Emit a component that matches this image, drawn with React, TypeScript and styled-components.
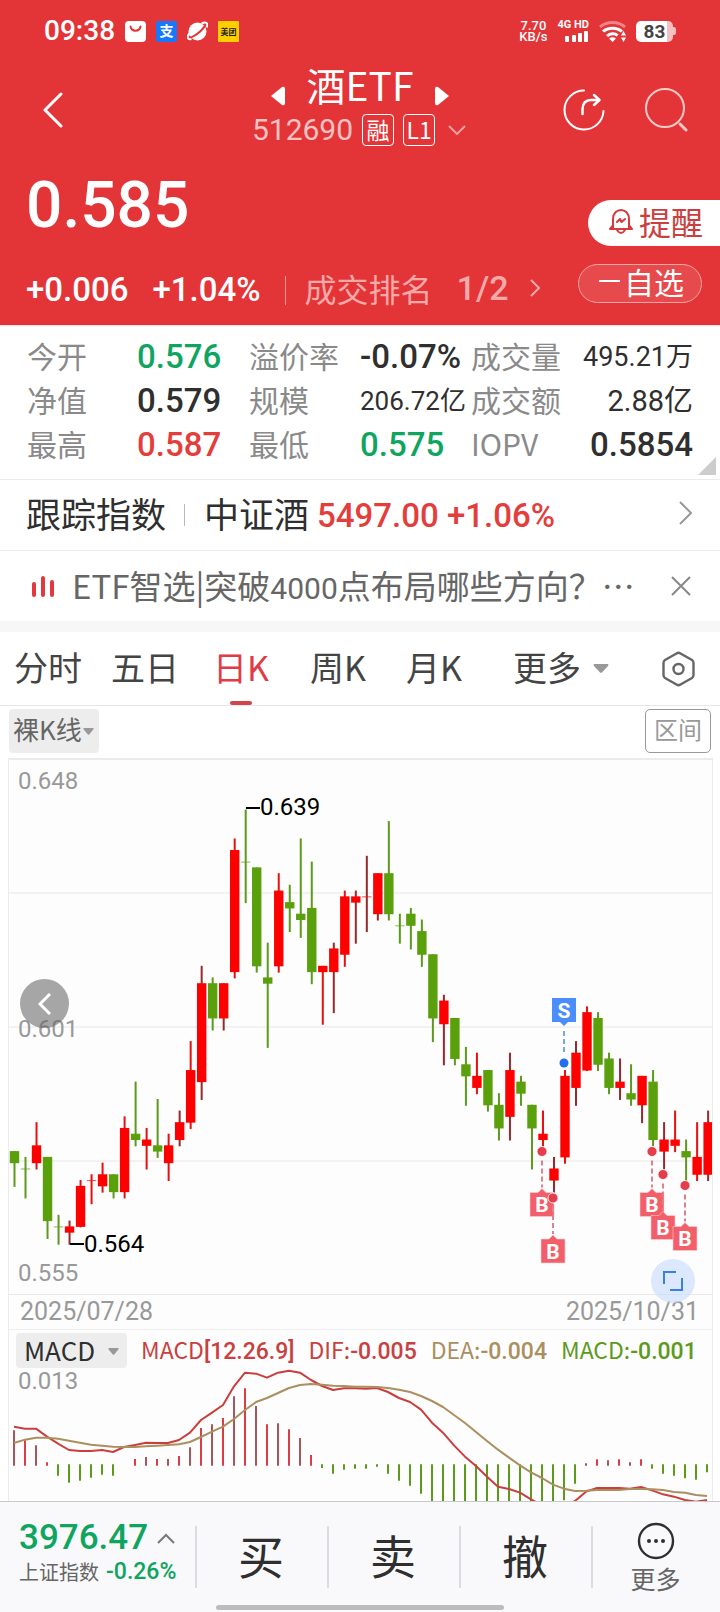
import React from 'react';
import styled, { createGlobalStyle } from 'styled-components';

const CJK = `"Noto Sans CJK SC", "Noto Sans", sans-serif`;
const NUM = `Roboto, "Noto Sans CJK SC", sans-serif`;

const RED = '#e33537';
const UP = '#e33e3b';
const DOWN = '#0fa561';
const INK = '#2f2f2f';

const GlobalStyle = createGlobalStyle`
  * { box-sizing: border-box; }
  body { margin: 0; background: #fff; font-family: ${CJK}; color: ${INK}; }
  button { border: 0; padding: 0; margin: 0; background: none; font: inherit; color: inherit; }
  dl, dt, dd, p, h1 { margin: 0; font-weight: 400; }
  svg { display: block; flex: none; }
`;

const Page = styled.div`
  display: flex;
  flex-direction: column;
  white-space: nowrap;
`;

/* ---------- header ---------- */

const Header = styled.header`
  background: ${RED};
  color: #fff;
  border-bottom: 1px solid #fcdcdc;
`;

const StatusBar = styled.div`
  display: flex;
  align-items: center;
  justify-content: space-between;
  height: 62px;
  padding: 0 44px;
`;

const StatusGroup = styled.div`
  display: flex;
  align-items: center;
  gap: 10px;
`;

const Clock = styled.span`
  font: 500 28px/32px ${NUM};
`;

const NetSpeed = styled.span`
  font: 500 13px/11px ${NUM};
  text-align: center;
  white-space: pre-line;
`;

const Signal = styled.span`
  display: flex;
  flex-direction: column;
  align-items: flex-end;
  gap: 1px;
  font: 700 11px/10px ${NUM};
`;

const Battery = styled.span`
  display: flex;
  align-items: center;
  &::after {
    content: '';
    width: 3px;
    height: 8px;
    border-radius: 0 2px 2px 0;
    background: #f6bfc0;
  }
`;

const BatteryLevel = styled.span`
  width: 37px;
  height: 21px;
  border-radius: 5px;
  background: linear-gradient(90deg, #fff 83%, #f6bfc0 83%);
  color: #444;
  font: 700 19px/21px ${NUM};
  text-align: center;
`;

const NavBar = styled.nav`
  display: grid;
  grid-template-columns: 1fr auto 1fr;
  align-items: center;
`;

const NavSide = styled.div<{ $end?: boolean }>`
  display: flex;
  align-items: center;
  justify-content: ${p => (p.$end ? 'flex-end' : 'flex-start')};
  gap: 40px;
  padding: 12px 32px 0 43px;
`;

const TitleBlock = styled.div`
  display: flex;
  flex-direction: column;
  align-items: center;
  gap: 8px;
`;

const TitleRow = styled.div`
  display: flex;
  align-items: center;
  gap: 22px;
  > button { padding-top: 24px; }
`;

const Title = styled.h1`
  font-size: 39px;
  line-height: 44px;
`;

const CodeRow = styled.div`
  display: flex;
  align-items: center;
  gap: 9px;
`;

const Code = styled.span`
  font: 400 30px/32px ${NUM};
  color: #fbc2c2;
`;

const Badge = styled.span`
  width: 32px;
  height: 32px;
  border: 1px solid #fff;
  border-radius: 4px;
  text-align: center;
  font-size: 23px;
  line-height: 28px;
`;

const PriceRow = styled.div`
  display: flex;
  align-items: flex-end;
  justify-content: space-between;
  height: 75px;
  margin-top: 25px;
  padding-left: 26px;
`;

const Price = styled.strong`
  align-self: flex-start;
  font: 500 64px/70px ${NUM};
`;

const RemindButton = styled.button`
  display: flex;
  align-items: center;
  gap: 6px;
  height: 46px;
  padding: 0 17px 4px 21px;
  border-radius: 23px 0 0 23px;
  background: #fff;
  color: #c9403f;
  font-size: 32px;
  line-height: 42px;
`;

const ChangeRow = styled.div`
  display: flex;
  align-items: flex-start;
  justify-content: space-between;
  padding: 18px 18px 15px 26px;
`;

const ChangeGroup = styled.div`
  display: flex;
  align-items: center;
  padding-top: 6px;
`;

const Change = styled.span`
  margin-right: 24px;
  font: 500 33px/40px ${NUM};
`;

const RankLink = styled.a`
  display: flex;
  align-items: center;
  padding: 0 0 5px 19px;
  border-left: 1px solid #f09a9a;
  color: #f7a9a9;
  font-size: 32px;
  line-height: 24px;
  text-decoration: none;
`;

const RankValue = styled.span`
  margin: 0 20px 0 24px;
  font: 500 34px/24px ${NUM};
`;

const WatchButton = styled.button`
  display: flex;
  align-items: center;
  gap: 4px;
  height: 39px;
  padding: 0 17px 5px 20px;
  border: 1px solid #f3a5a5;
  border-radius: 20px;
  background: #e74a4c;
  font-size: 30px;
  line-height: 32px;
`;

/* ---------- quote details ---------- */

const Quotes = styled.dl`
  position: relative;
  display: grid;
  grid-template-columns: 110fr 112fr 111fr 111fr 90fr 132fr;
  padding: 9px 27px 12px;
  border-bottom: 1px solid #ebebeb;
  line-height: 44px;
`;

const QuoteName = styled.dt`
  min-width: 0;
  font-size: 30px;
  line-height: 41px;
  color: #8a8a8a;
`;

const QuoteValue = styled.dd<{ $tone?: string; $size?: number; $end?: boolean }>`
  display: flex;
  justify-content: ${p => (p.$end ? 'flex-end' : 'flex-start')};
  min-width: 0;
  font-family: ${NUM};
  font-weight: ${p => (p.$size ? 400 : 500)};
  font-size: ${p => p.$size ?? 33}px;
  color: ${p => p.$tone ?? INK};
`;

const Corner = styled.span`
  position: absolute;
  right: 4px;
  bottom: 4px;
  border-left: 18px solid transparent;
  border-bottom: 18px solid #ccc;
`;

const IndexLink = styled.a`
  display: flex;
  align-items: center;
  height: 71px;
  padding: 0 27px 5px 26px;
  border-bottom: 1px solid #ebebeb;
  color: ${INK};
  font-size: 35px;
  line-height: 44px;
  text-decoration: none;
`;

const IndexName = styled.span`
  margin-right: 18px;
`;

const IndexFund = styled.span`
  padding-left: 20px;
  background: linear-gradient(#bbb, #bbb) 0 60% / 1px 22px no-repeat;
`;

const IndexNumber = styled.span`
  flex: 1;
  margin-left: 8px;
  padding-top: 6px;
  font: 500 33px/44px ${NUM};
  color: ${UP};
`;

const News = styled.div`
  display: flex;
  align-items: center;
  height: 81px;
  padding: 0 29px 0 32px;
  border-bottom: 11px solid #f7f7f7;
`;

const NewsText = styled.a`
  flex: 1;
  padding: 2px 0 0 17px;
  color: #666;
  font-size: 33px;
  line-height: 44px;
  text-decoration: none;
`;

const NewsNumber = styled.span`
  font: 400 30px/44px ${NUM};
`;

/* ---------- period tabs ---------- */

const Tabs = styled.div`
  display: grid;
  grid-template-columns: 97fr 102fr 97fr 96fr 107fr 149fr 58fr;
  align-items: center;
  justify-items: start;
  height: 74px;
  padding-left: 14px;
  border-bottom: 1px solid #e6e6e6;
`;

const Tab = styled.button<{ $active?: boolean }>`
  position: relative;
  display: flex;
  align-items: center;
  gap: 12px;
  height: 73px;
  padding-bottom: 4px;
  font-size: 34px;
  color: ${p => (p.$active ? '#e33b45' : '#444')};
  &::after {
    content: '';
    display: ${p => (p.$active ? 'block' : 'none')};
    position: absolute;
    left: 50%;
    bottom: 0;
    width: 22px;
    height: 4px;
    margin-left: -11px;
    border-radius: 2px;
    background: #d0444c;
  }
`;

const Tools = styled.div`
  display: flex;
  justify-content: space-between;
  padding: 3px 9px 5px;
`;

const ModeButton = styled.button`
  display: flex;
  align-items: center;
  gap: 1px;
  height: 44px;
  padding: 0 5px 4px 4px;
  border-radius: 4px;
  background: #ededed;
  color: #666;
  font-size: 26px;
  line-height: 38px;
`;

const RangeButton = styled.button`
  height: 44px;
  padding: 0 8px 4px;
  border: 1px solid #999;
  border-radius: 5px;
  color: #999;
  font-size: 24px;
  line-height: 34px;
`;

/* ---------- chart ---------- */

const ChartFrame = styled.section`
  margin: 0 7px 0 8px;
  border: solid #ebebeb;
  border-width: 2px 1px 0;
  background: #fdfdfd;
  svg.plot { width: 100%; height: auto; }
`;

const KPanel = styled.div`
  position: relative;
  border-bottom: 1px solid #e8e8e8;
`;

const RoundButton = styled.button`
  position: absolute;
  display: flex;
  align-items: center;
  justify-content: center;
  border-radius: 50%;
`;

const PrevButton = styled(RoundButton)`
  left: 11px;
  top: 219px;
  width: 49px;
  height: 49px;
  background: rgba(100, 100, 100, 0.57);
`;

const ExpandButton = styled(RoundButton)`
  right: 17px;
  bottom: -9px;
  width: 44px;
  height: 44px;
  background: rgba(205, 222, 252, 0.7);
`;

const Dates = styled.div`
  display: flex;
  justify-content: space-between;
  padding: 0 13px 0 11px;
  border-bottom: 1px solid #efefef;
  color: #999;
  font: 400 25px/34px ${NUM};
`;

const MacdPanel = styled.div`
  display: grid;
  > * { grid-area: 1 / 1; }
`;

const MacdHead = styled.div`
  display: flex;
  align-items: center;
  align-self: start;
  height: 38px;
  padding: 3px 12px 0 7px;
  font-size: 24px;
  line-height: 34px;
`;

const MacdSelect = styled.button`
  display: flex;
  align-items: center;
  justify-content: space-between;
  width: 111px;
  height: 35px;
  margin-right: 14px;
  padding: 0 8px 2px;
  border-radius: 4px;
  background: #ededed;
  font-size: 26px;
  line-height: 33px;
`;

const Legend = styled.span<{ $color: string; $gap: number }>`
  margin-right: ${p => p.$gap}px;
  color: ${p => p.$color};
  font-size: 23px;
`;

const LegendNumber = styled.span`
  font: 500 23px/34px ${NUM};
`;

/* ---------- bottom bar ---------- */

const BottomBar = styled.footer`
  position: relative;
  display: grid;
  grid-template-columns: 195fr 132fr 132fr 132fr 129fr;
  height: 111px;
  border-top: 1px solid #c9c9cc;
  background: #f9f9fb;
`;

const Market = styled.div`
  padding: 17px 0 0 19px;
`;

const MarketLine = styled.div`
  display: flex;
  align-items: center;
`;

const MarketValue = styled.strong`
  margin-right: 9px;
  font: 500 35px/38px ${NUM};
  color: ${DOWN};
`;

const MarketName = styled.span`
  margin-right: 7px;
  font-size: 20px;
  line-height: 30px;
  color: #666;
`;

const MarketChange = styled.span`
  font: 500 23px/30px ${NUM};
  color: ${DOWN};
`;

const Trade = styled.button`
  padding-bottom: 6px;
  background: linear-gradient(#dcdce0, #dcdce0) 0 24px / 2px 62px no-repeat;
  font-size: 46px;
  line-height: 60px;
`;

const More = styled(Trade)`
  display: flex;
  flex-direction: column;
  align-items: center;
  padding: 20px 0 0;
  color: #666;
  font-size: 25px;
  line-height: 36px;
`;

const HomeBar = styled.span`
  position: absolute;
  left: 30%;
  right: 30%;
  bottom: 2px;
  height: 5px;
  border-radius: 3px;
  background: #bcbcbe;
`;

/* ---------- icons ---------- */

const Stroke = ({ w, h, d, color, width = 2, round }: {
  w: number; h: number; d: string; color: string; width?: number; round?: boolean;
}) => (
  <svg width={w} height={h} viewBox={`0 0 ${w} ${h}`} fill="none" stroke={color} strokeWidth={width}
    strokeLinecap={round ? 'round' : 'butt'} strokeLinejoin={round ? 'round' : 'miter'}>
    <path d={d} />
  </svg>
);

const CaretSvg = styled.svg`
  margin-top: 4px;
`;

const Caret = ({ w, h }: { w: number; h: number }) => (
  <CaretSvg width={w} height={h} viewBox="0 0 16 9" preserveAspectRatio="none">
    <path d="M1 0H15Q16 1 15 2L9 8.500Q8 9 7 8.500L1 2Q0 1 1 0Z" fill="#999" />
  </CaretSvg>
);

const BagIcon = () => (
  <svg width="21" height="21" viewBox="0 0 21 21">
    <rect width="21" height="21" rx="4" fill="#fff" />
    <path d="M5.500 5.500c1 5.500 9 5.500 10 0" fill="none" stroke={RED} strokeWidth="2" strokeLinecap="round" />
  </svg>
);

const PayIcon = () => (
  <svg width="21" height="21" viewBox="0 0 21 21">
    <rect width="21" height="21" rx="2" fill="#1677ff" />
    <text x="10.500" y="15" fontSize="14" fontWeight="700" textAnchor="middle" fill="#fff" fontFamily="Noto Sans CJK SC">支</text>
  </svg>
);

const PlanetIcon = () => (
  <svg width="21" height="21" viewBox="0 0 21 21">
    <circle cx="10.500" cy="10.500" r="9" fill="#fff" />
    <path d="M3 16.500C7 16 16 9 18 4.500" stroke={RED} strokeWidth="2" fill="none" />
    <path d="M2.500 12C-0.500 16 0.500 19 4.500 18M14.500 2.500C19 0.500 21.500 2 19.500 6.500" stroke="#fff" strokeWidth="2" fill="none" />
  </svg>
);

const MealIcon = () => (
  <svg width="21" height="21" viewBox="0 0 21 21">
    <rect width="21" height="21" rx="1" fill="#ffd000" />
    <text x="10.500" y="13.500" fontSize="8" fontWeight="700" textAnchor="middle" fill="#222" fontFamily="Noto Sans CJK SC">美团</text>
  </svg>
);

const BarsIcon = () => (
  <svg width="24" height="11" viewBox="0 0 24 11" fill="#fff">
    <rect x="0" y="5" width="4" height="6" rx="1" />
    <rect x="7" y="4" width="4" height="7" rx="1" />
    <rect x="13" y="2" width="4" height="9" rx="1" />
    <rect x="19" y="0" width="4" height="11" rx="1" />
  </svg>
);

const WifiIcon = () => (
  <svg width="27" height="21" viewBox="0 0 27 21" fill="none" stroke="#fff" strokeWidth="3">
    <path d="M1 6C8 0 19 0 26 6" stroke="#f08385" />
    <path d="M4 10.500C9 6 18 6 23 10.500" />
    <path d="M8 15C11 12 16 12 18.500 14.500" />
    <path d="M10 17.500L13.500 21L17 17.500Q13.500 15 10 17.500Z" fill="#fff" stroke="none" />
    <path d="M24.500 10L27 14.500H22ZM24.500 21L27 16.500H22Z" fill="#fff" stroke="none" />
  </svg>
);

const ShareIcon = () => (
  <svg width="42" height="42" viewBox="0 0 42 42" fill="none" stroke="#fff" strokeWidth="2" strokeLinecap="round" strokeLinejoin="round">
    <path d="M21 1.500A19.500 19.500 0 1 0 40.500 22" />
    <path d="M19.500 25V20Q20 11 28 11H36M31 6L36.500 11L31 16" strokeWidth="2.500" />
  </svg>
);

const SearchIcon = () => (
  <svg width="43" height="44" viewBox="0 0 43 44" fill="none" stroke="#fcc9c9" strokeWidth="2" strokeLinecap="round">
    <circle cx="20" cy="20" r="19" />
    <path d="M35 36L41 42" strokeWidth="3" />
  </svg>
);

const BellIcon = () => (
  <svg width="24" height="25" viewBox="0 0 24 25" fill="none" stroke="#d8393d" strokeWidth="2" strokeLinejoin="round" strokeLinecap="round">
    <path d="M4 20V10C4 -2 20 -2 20 10V20M1 20H23M1 20L3.500 17M23 20L20.500 17" />
    <path d="M8 21Q12 27 16 21" />
    <path d="M8 13L11 10L12.500 13L16 10" />
  </svg>
);

const PulseIcon = () => (
  <svg width="23" height="21" viewBox="0 0 23 21" fill="#e03a3f">
    <rect x="0" y="6" width="4" height="15" rx="2" />
    <rect x="9" y="0" width="4" height="21" rx="2" />
    <rect x="18" y="4" width="4" height="17" rx="2" />
  </svg>
);

const HexIcon = () => (
  <svg width="33" height="36" viewBox="0 0 33 36" fill="none" stroke="#666" strokeWidth="2.400" strokeLinejoin="round">
    <path d="M14.500 2.500Q16.500 1 18.500 2.500L30 9Q31.500 10 31.500 12V24Q31.500 26 30 27L18.500 33.500Q16.500 35 14.500 33.500L3 27Q1.500 26 1.500 24V12Q1.500 10 3 9Z" />
    <circle cx="16.500" cy="18" r="5" />
  </svg>
);

const DotsIcon = () => (
  <svg width="38" height="38" viewBox="0 0 38 38" fill={INK}>
    <circle cx="19" cy="19" r="17" fill="none" stroke={INK} strokeWidth="2.400" />
    <circle cx="12" cy="19" r="2" /><circle cx="19" cy="19" r="2" /><circle cx="26" cy="19" r="2" />
  </svg>
);

/* ---------- data ---------- */

// [kind, high, body top, body bottom, low] in thousandths; g = fell, r = rose, R = rose with a dark wick
type Candle = [string, number, number, number, number];
const candles: Candle[] = [
  ['g', 580, 580, 578, 574], ['g', 579, 577, 577, 572], ['r', 585, 581, 578, 577], ['g', 579, 579, 568, 565],
  ['g', 569, 567, 567, 564], ['R', 568, 567, 566, 564], ['r', 575, 574, 567, 567], ['r', 576, 575, 575, 571],
  ['r', 578, 576, 574, 573], ['g', 576, 576, 573, 572], ['r', 586, 584, 573, 572], ['g', 592, 583, 582, 581],
  ['r', 584, 582, 581, 577], ['g', 589, 581, 580, 579], ['r', 583, 581, 578, 575], ['R', 587, 585, 582, 581],
  ['r', 599, 594, 585, 584], ['R', 612, 609, 592, 589], ['g', 610, 609, 603, 601], ['R', 609, 609, 603, 601],
  ['r', 634, 632, 611, 610], ['g', 639, 630, 630, 623], ['g', 629, 629, 612, 611], ['g', 616, 610, 609, 598],
  ['r', 628, 625, 612, 611], ['g', 626, 623, 622, 618], ['g', 634, 621, 620, 617], ['g', 630, 622, 611, 609],
  ['r', 612, 612, 611, 602], ['R', 616, 615, 611, 604], ['r', 625, 624, 614, 612], ['R', 625, 624, 623, 616],
  ['R', 631, 624, 624, 618], ['R', 628, 628, 621, 620], ['g', 637, 628, 621, 620], ['g', 621, 619, 619, 616],
  ['g', 622, 621, 619, 615], ['g', 620, 618, 614, 612], ['g', 614, 614, 603, 599], ['R', 607, 606, 602, 595],
  ['g', 603, 603, 596, 595], ['g', 598, 595, 593, 588], ['r', 597, 593, 591, 590], ['g', 594, 594, 588, 587],
  ['g', 590, 588, 584, 582], ['R', 597, 594, 586, 582], ['g', 593, 592, 590, 588], ['g', 588, 588, 584, 577],
  ['r', 587, 583, 582, 581], ['R', 579, 577, 575, 573], ['r', 594, 593, 579, 578], ['R', 599, 597, 591, 588],
  ['r', 605, 604, 594, 594], ['g', 604, 603, 595, 594], ['g', 597, 596, 591, 590], ['R', 596, 592, 591, 589],
  ['g', 595, 590, 589, 588], ['R', 593, 593, 588, 585], ['g', 594, 592, 582, 581], ['R', 585, 582, 580, 577],
  ['r', 587, 582, 581, 580], ['g', 582, 580, 579, 575], ['r', 585, 579, 576, 575], ['R', 587, 585, 576, 575],
];

const dif = [
  320, 326, 326, 350, 371, 390, 393, 393, 390, 396, 381, 375, 368, 369, 369, 360, 338, 300, 278, 255, 199, 158,
  161, 173, 158, 152, 158, 180, 198, 210, 205, 205, 206, 204, 216, 234, 246, 269, 308, 338, 376, 410, 438, 470,
  500, 507, 518, 538, 556, 566, 560, 543, 515, 504, 504, 504, 506, 501, 511, 523, 530, 540, 545, 540,
];
const dea = [
  369, 359, 353, 353, 356, 362, 368, 374, 377, 380, 381, 381, 379, 377, 375, 373, 366, 351, 335, 320, 297, 270,
  246, 234, 219, 204, 195, 192, 194, 197, 198, 200, 200, 201, 204, 209, 216, 228, 243, 261, 285, 309, 336, 363,
  389, 413, 436, 457, 474, 494, 506, 513, 512, 510, 510, 510, 507, 507, 508, 510, 516, 518, 525, 528,
];
const bars = [
  331, 361, 376, 427, 467, 488, 482, 473, 464, 467, 434, 417, 411, 417, 417, 408, 382, 324, 313, 294, 229, 205,
  258, 313, 310, 328, 354, 405, 444, 461, 449, 446, 446, 440, 461, 482, 497, 521, 560, 560, 560, 560, 560, 560,
  560, 560, 560, 560, 560, 560, 541, 491, 430, 418, 421, 418, 427, 418, 446, 461, 467, 475, 479, 457,
];

const candleX = (i: number) => 5.5 + i * 11.01;
const priceY = (p: number) => 50 + (639 - p) * 5.79;
const macdX = (i: number) => 15 + i * 33;
const line = (ys: number[]) => ys.map((y, i) => `${macdX(i)},${y}`).join(' ');

const buys = [[533, 391.5], [544, 438], [643, 391.5], [654, 414.5], [676, 425.5]];

const CandleChart = () => (
  <svg className="plot" viewBox="0 0 703 534" fontFamily="Roboto" fontSize="24">
    {[133, 267, 401].map(y => <path key={y} d={`M0 ${y}H703`} stroke="#f2f2f2" strokeWidth="2" />)}
    {candles.map(([kind, high, top, bottom, low], i) => {
      const body = kind === 'g' ? '#5aa00c' : '#fe0000';
      const wick = kind === 'g' ? '#5c9a1c' : kind === 'R' ? '#962a2c' : '#e6100f';
      const x = candleX(i);
      const flat = top === bottom;
      return (
        <g key={i}>
          <rect x={x - 1} y={priceY(high) - 0.5} width="2" height={priceY(low) - priceY(high) + 1} fill={wick} />
          <rect x={x - 4.7} y={priceY(top) - 0.5} width="9.4" height={flat ? 1 : priceY(bottom) - priceY(top) + 0.5}
            fill={body} opacity={flat ? 0.7 : 1} />
        </g>
      );
    })}
    <g stroke="#000" strokeWidth="2">
      <path d="M237 48H251M61 484H75" />
    </g>
    <text x="251" y="55">0.639</text>
    <text x="75" y="492">0.564</text>
    <g fill="#999">
      <text x="9" y="29">0.648</text>
      <text x="9" y="277">0.601</text>
      <text x="9" y="521">0.555</text>
    </g>
    <g fontWeight="700" fontSize="21" textAnchor="middle">
      <path d="M555 271V295" stroke="#7aa8cf" strokeWidth="2" strokeDasharray="5 3" />
      <circle cx="555" cy="303" r="4.5" fill="#1f6ff0" />
      <path d="M543 238H567V262H559L555 266L551 262H543Z" fill="#4b8dfa" />
      <text x="555" y="257.500" fill="#fff">S</text>
      {buys.map(([x, y]) => (
        <g key={x}>
          <path d={`M${x} ${y + 9}V${y + 36}`} stroke="#e0808a" strokeWidth="2" strokeDasharray="5 3" />
          <path d={`M${x - 12} ${y + 41}H${x - 4}L${x} ${y + 37}L${x + 4} ${y + 41}H${x + 12}V${y + 65}H${x - 12}Z`}
            fill="#f25f6b" stroke="#fbd0d3" strokeWidth="0.6" />
          <text x={x} y={y + 60.5} fill="#fff">B</text>
        </g>
      ))}
      {buys.map(([x, y]) => (
        <circle key={x} cx={x} cy={y} r="5" fill="#e63d4c" stroke="#fff" strokeWidth="0.8" />
      ))}
    </g>
  </svg>
);

const MacdChart = () => (
  <svg className="plot" viewBox="0 30 2109 513" fill="none" strokeWidth="6">
    {bars.map((y, i) => (y === 434 ? null : (
      <path key={i} d={y < 434 ? `M${macdX(i)} ${y}V437` : `M${macdX(i)} 433V${y}`}
        stroke={y > 434 ? '#5c9a1c' : i % 2 ? '#dc3c44' : '#a9555d'} />
    )))}
    <polyline points={line(dif)} stroke="#cb3e3e" strokeLinejoin="round" />
    <polyline points={line(dea)} stroke="#ab8f5f" strokeLinejoin="round" />
    <text x="27" y="207" fill="#999" fontFamily="Roboto" fontSize="72">0.013</text>
  </svg>
);

export default function App() {
  return (
    <Page lang="zh-CN">
      <GlobalStyle />
      <Header>
        <StatusBar>
          <StatusGroup>
            <Clock>09:38</Clock>
            <BagIcon /><PayIcon /><PlanetIcon /><MealIcon />
          </StatusGroup>
          <StatusGroup>
            <NetSpeed>{'7.70\nKB/s'}</NetSpeed>
            <Signal>4G HD<BarsIcon /></Signal>
            <WifiIcon />
            <Battery><BatteryLevel>83</BatteryLevel></Battery>
          </StatusGroup>
        </StatusBar>
        <NavBar>
          <NavSide>
            <button aria-label="返回"><Stroke w={20} h={36} d="M18 2L2 18L18 34" color="#fff" width={3} round /></button>
          </NavSide>
          <TitleBlock>
            <TitleRow>
              <button aria-label="上一个">
                <svg width="14" height="20" viewBox="0 0 14 20"><path d="M0 10L11 1Q14 0 14 3V17Q14 20 11 19Z" fill="#fff" /></svg>
              </button>
              <Title>酒ETF</Title>
              <button aria-label="下一个">
                <svg width="14" height="20" viewBox="0 0 14 20"><path d="M14 10L3 1Q0 0 0 3V17Q0 20 3 19Z" fill="#fff" /></svg>
              </button>
            </TitleRow>
            <CodeRow>
              <Code>512690</Code>
              <Badge>融</Badge>
              <Badge>L1</Badge>
              <Stroke w={24} h={10} d="M5 1L13 9L21 1" color="#f3a0a0" />
            </CodeRow>
          </TitleBlock>
          <NavSide $end>
            <button aria-label="分享"><ShareIcon /></button>
            <button aria-label="搜索"><SearchIcon /></button>
          </NavSide>
        </NavBar>
        <PriceRow>
          <Price>0.585</Price>
          <RemindButton><BellIcon />提醒</RemindButton>
        </PriceRow>
        <ChangeRow>
          <ChangeGroup>
            <Change>+0.006</Change>
            <Change>+1.04%</Change>
            <RankLink href="#rank">
              成交排名<RankValue>1/2</RankValue>
              <Stroke w={12} h={18} d="M2 1L10 9L2 17" color="#f7a9a9" />
            </RankLink>
          </ChangeGroup>
          <WatchButton><Stroke w={21} h={2} d="M0 1H21" color="#fff" />自选</WatchButton>
        </ChangeRow>
      </Header>

      <Quotes>
        <QuoteName>今开</QuoteName><QuoteValue $tone={DOWN}>0.576</QuoteValue>
        <QuoteName>溢价率</QuoteName><QuoteValue>-0.07%</QuoteValue>
        <QuoteName>成交量</QuoteName><QuoteValue $size={27} $end>495.21万</QuoteValue>
        <QuoteName>净值</QuoteName><QuoteValue>0.579</QuoteValue>
        <QuoteName>规模</QuoteName><QuoteValue $size={26}>206.72亿</QuoteValue>
        <QuoteName>成交额</QuoteName><QuoteValue $size={29} $end>2.88亿</QuoteValue>
        <QuoteName>最高</QuoteName><QuoteValue $tone={UP}>0.587</QuoteValue>
        <QuoteName>最低</QuoteName><QuoteValue $tone={DOWN}>0.575</QuoteValue>
        <QuoteName>IOPV</QuoteName><QuoteValue $end>0.5854</QuoteValue>
        <Corner />
      </Quotes>

      <IndexLink href="#index">
        <IndexName>跟踪指数</IndexName>
        <IndexFund>中证酒</IndexFund>
        <IndexNumber>5497.00 +1.06%</IndexNumber>
        <Stroke w={14} h={24} d="M1 1L12 12L1 23" color="#999" />
      </IndexLink>

      <News>
        <PulseIcon />
        <NewsText href="#news">ETF智选|突破<NewsNumber>4000</NewsNumber>点布局哪些方向？…</NewsText>
        <button aria-label="关闭"><Stroke w={20} h={20} d="M1 1L19 19M19 1L1 19" color="#888" /></button>
      </News>

      <Tabs>
        <Tab>分时</Tab>
        <Tab>五日</Tab>
        <Tab $active>日K</Tab>
        <Tab>周K</Tab>
        <Tab>月K</Tab>
        <Tab>更多<Caret w={16} h={9} /></Tab>
        <button aria-label="设置"><HexIcon /></button>
      </Tabs>

      <Tools>
        <ModeButton>裸K线<Caret w={11} h={7} /></ModeButton>
        <RangeButton>区间</RangeButton>
      </Tools>

      <ChartFrame>
        <KPanel>
          <CandleChart />
          <PrevButton aria-label="向前"><Stroke w={14} h={22} d="M12 1L2 11L12 21" color="#fff" width={3} /></PrevButton>
          <ExpandButton aria-label="全屏">
            <Stroke w={20} h={20} d="M1 13V1H13M7 19H19V7" color="#3c80dc" width={2} />
          </ExpandButton>
        </KPanel>
        <Dates><span>2025/07/28</span><span>2025/10/31</span></Dates>
        <MacdPanel>
          <MacdChart />
          <MacdHead>
            <MacdSelect>MACD<Caret w={11} h={7} /></MacdSelect>
            <Legend $color="#c9403f" $gap={14}>MACD<LegendNumber>[12.26.9]</LegendNumber></Legend>
            <Legend $color="#c9403f" $gap={14}>DIF:<LegendNumber>-0.005</LegendNumber></Legend>
            <Legend $color="#ab8f5f" $gap={14}>DEA:<LegendNumber>-0.004</LegendNumber></Legend>
            <Legend $color="#5c9a1c" $gap={0}>MACD:<LegendNumber>-0.001</LegendNumber></Legend>
          </MacdHead>
        </MacdPanel>
      </ChartFrame>

      <BottomBar>
        <Market>
          <MarketLine>
            <MarketValue>3976.47</MarketValue>
            <Stroke w={18} h={11} d="M1 10L9 2L17 10" color="#777" />
          </MarketLine>
          <MarketLine>
            <MarketName>上证指数</MarketName>
            <MarketChange>-0.26%</MarketChange>
          </MarketLine>
        </Market>
        <Trade>买</Trade>
        <Trade>卖</Trade>
        <Trade>撤</Trade>
        <More><DotsIcon />更多</More>
        <HomeBar />
      </BottomBar>
    </Page>
  );
}
